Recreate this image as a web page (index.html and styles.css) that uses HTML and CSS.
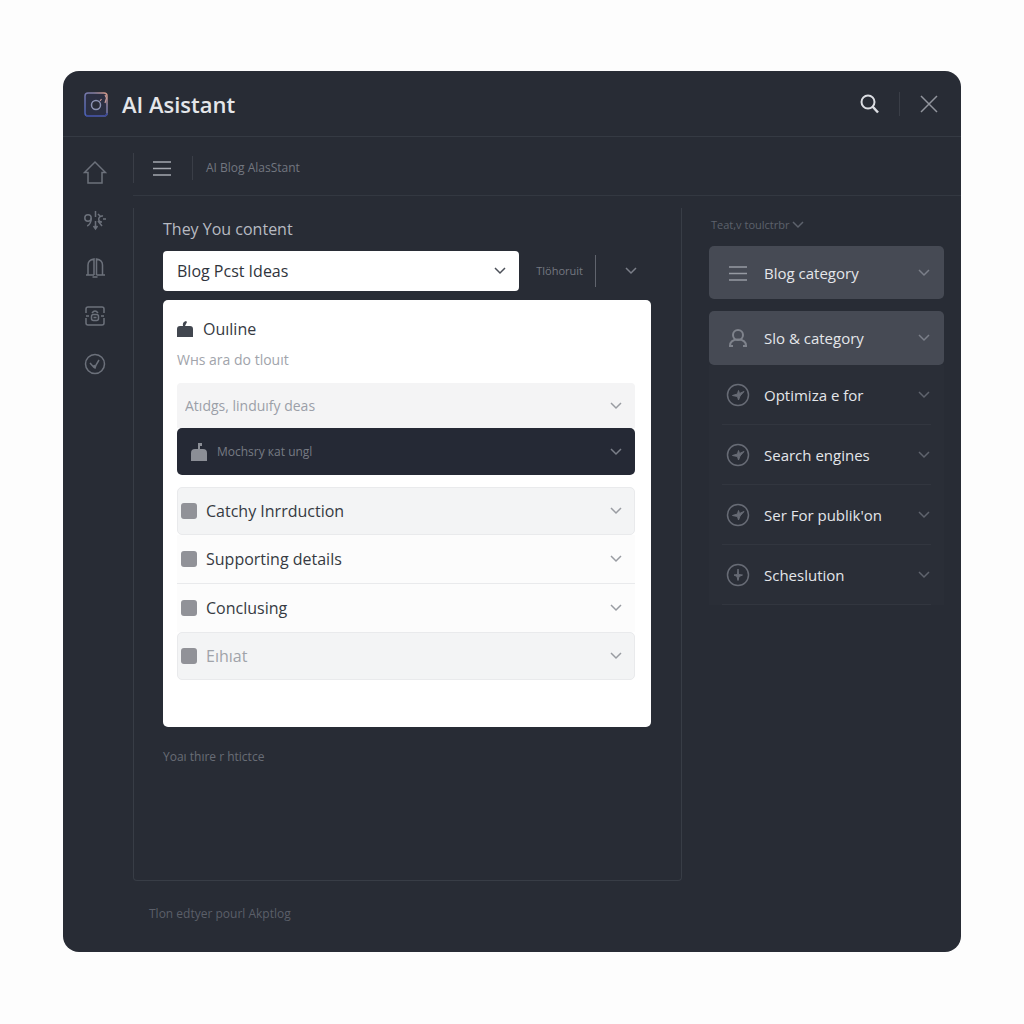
FILE: index.html
```html
<!DOCTYPE html>
<html lang="en">
<head>
<meta charset="utf-8">
<meta name="viewport" content="width=device-width, initial-scale=1">
<title>AI Asistant</title>
<link rel="stylesheet" href="styles.css">
</head>
<body>
<svg class="defs" aria-hidden="true">
  <symbol id="chevron" viewBox="0 0 12 12"><path d="M1 3l5 5 5-5"/></symbol>
  <symbol id="lines" viewBox="0 0 18 16"><path d="M0 2h18M0 8.500h18M0 15h18"/></symbol>
  <symbol id="compass" viewBox="0 0 24 24"><circle cx="12" cy="12" r="10.500"/><path fill="currentColor" stroke-width="1" d="M6.500 12.500l5-1.500 1-3.500 1 3 4.500-2-4 4.500-1.500 4-1-3.500z"/></symbol>
</svg>
<div class="window">
  <header class="titlebar">
    <svg class="logo" viewBox="0 0 26 28" aria-hidden="true">
      <defs>
        <linearGradient id="edge" x1="1" y1="0" x2="0" y2="1">
          <stop offset="0" stop-color="#d79a86"/><stop offset=".3" stop-color="#8580a4"/><stop offset="1" stop-color="#4b62b8"/>
        </linearGradient>
      </defs>
      <rect x="2" y="3" width="22" height="23" rx="3" fill="#2b2f42" stroke="url(#edge)" stroke-width="1.500"/>
      <path d="M3 26h18q3 0 3-3" fill="none" stroke="#3c4994" stroke-width="1.500"/>
      <circle cx="13" cy="15" r="4.500" fill="#292c38" stroke="#8d94b4" stroke-width="1.500"/>
      <path d="M17 11l1.500-2M22 5l1.500 3-1.500 5" fill="none" stroke="#c39a98" stroke-width="1.200"/>
    </svg>
    <h1>AI Asistant</h1>
    <button class="icon-button search" aria-label="Search"><svg viewBox="0 0 20 20"><circle cx="8" cy="8" r="6.500"/><path d="M12.500 12.500l5.500 6" stroke-width="2.500"/></svg></button>
    <span class="rule"></span>
    <button class="icon-button close" aria-label="Close"><svg viewBox="0 0 20 20"><path d="M2 2l16 16M18 2L2 18"/></svg></button>
  </header>
  <div class="body">
    <nav class="sidebar" aria-label="Sections">
      <a href="#home" aria-label="Home"><svg viewBox="0 0 24 24"><path d="M1.500 12.500L12 2l10.500 10.500H19V23H5V12.500z"/></svg></a>
      <a href="#tools" aria-label="Tools"><svg viewBox="0 0 24 24"><circle cx="5" cy="10" r="3.200"/><path d="M8.200 10c0 4-1 6.500-4 8M12.500 3v6M12.500 13v8M10.500 18l2 3 2-3M20 8c-5-1-6 6-1 6M15 13l4 5M20 11h3M15 6l2 2"/></svg></a>
      <a href="#alerts" aria-label="Alerts"><svg viewBox="0 0 24 24"><path d="M5 19V9c0-4 3-5.500 6-6v16M13.500 19V3c3 .5 6 2 6 6v10M3 19h8M13.500 19H22M9.500 21h5"/></svg></a>
      <a href="#private" aria-label="Private"><svg viewBox="0 0 24 24"><path d="M3 9V5q0-2 2-2h14q2 0 2 2v4M3 14v5q0 2 2 2h14q2 0 2-2v-5M3 12h3M18 12h3"/><rect x="8.500" y="10.500" width="7" height="6" rx="2"/><path d="M9 9q3-4 6 0M10.500 13.500h3"/></svg></a>
      <a href="#history" aria-label="History"><svg viewBox="0 0 24 24"><circle cx="12" cy="12" r="9.500"/><path d="M7 11l4 4.500 1 .5 1-3 3-5M12 16l-1-3"/></svg></a>
    </nav>
    <div class="content">
      <div class="toolbar">
        <span class="rule tall"></span>
        <button class="icon-button menu" aria-label="Menu"><svg><use href="#lines"/></svg></button>
        <span class="rule"></span>
        <span class="crumb">AI Blog AlasStant</span>
      </div>
      <div class="columns">
        <main class="panel">
          <h2><label for="content">They You content</label></h2>
          <div class="picker">
            <div class="select">
              <select id="content"><option>Blog Pcst Ideas</option></select>
              <svg class="chevron"><use href="#chevron"/></svg>
            </div>
            <span class="hint">Tlöhoruit</span>
            <span class="rule bright"></span>
            <button class="icon-button more" aria-label="More"><svg class="chevron"><use href="#chevron"/></svg></button>
          </div>
          <section class="card">
            <h3><svg viewBox="0 0 16 16" aria-hidden="true"><path d="M0 16V8q0-3 3-3h3q-1-4 3-5l1 1-2 4h5q3 0 3 3v8z"/></svg>Ouıline</h3>
            <p>Wнs ara do tlouıt</p>
            <div class="select soft">
              <select aria-label="Style"><option>Atıdgs, linduıfy deas</option></select>
              <svg class="chevron"><use href="#chevron"/></svg>
            </div>
            <button class="dark-row"><svg viewBox="0 0 16 18" aria-hidden="true"><path d="M0 18V10q0-4 4-4h3V0h4v3H9v3h3q4 0 4 4v8z"/></svg><span>Mochsry кat ungl</span><svg class="chevron"><use href="#chevron"/></svg></button>
            <ul class="outline">
              <li class="shaded"><label><input type="checkbox">Catchy Inrrduction</label><button class="icon-button" aria-label="Expand"><svg class="chevron"><use href="#chevron"/></svg></button></li>
              <li><label><input type="checkbox">Supporting details</label><button class="icon-button" aria-label="Expand"><svg class="chevron"><use href="#chevron"/></svg></button></li>
              <li><label><input type="checkbox">Conclusing</label><button class="icon-button" aria-label="Expand"><svg class="chevron"><use href="#chevron"/></svg></button></li>
              <li class="shaded muted"><label><input type="checkbox">Eıhıat</label><button class="icon-button" aria-label="Expand"><svg class="chevron"><use href="#chevron"/></svg></button></li>
            </ul>
          </section>
          <p class="note">Yoaı thıre r htictce</p>
        </main>
        <aside class="options">
          <button class="filter">Teat,v toulctrbr<svg class="chevron"><use href="#chevron"/></svg></button>
          <button class="tile"><svg class="mark wide"><use href="#lines"/></svg><span>Blog category</span><svg class="chevron"><use href="#chevron"/></svg></button>
          <button class="tile"><svg class="mark person" viewBox="0 0 24 24"><circle cx="12" cy="9" r="5"/><path d="M4 20c0-4 3-6.500 8-6.500s8 2.500 8 6.500M3 20h4M17 20h4"/></svg><span>Slo &amp; category</span><svg class="chevron"><use href="#chevron"/></svg></button>
          <div class="list">
            <button><svg class="mark"><use href="#compass"/></svg><span>Optimiza e for</span><svg class="chevron"><use href="#chevron"/></svg></button>
            <button><svg class="mark"><use href="#compass"/></svg><span>Search engines</span><svg class="chevron"><use href="#chevron"/></svg></button>
            <button><svg class="mark"><use href="#compass"/></svg><span>Ser For publik'on</span><svg class="chevron"><use href="#chevron"/></svg></button>
            <button><svg class="mark" viewBox="0 0 24 24"><circle cx="12" cy="12" r="10.500"/><path fill="currentColor" stroke-width="1" d="M12 6l.5 5.500 4 .5-3.500 1.500-1 4-1-4L8 12l3.500-.5z"/></svg><span>Scheslution</span><svg class="chevron"><use href="#chevron"/></svg></button>
          </div>
        </aside>
      </div>
      <footer>Tlon edtyer pourl Akptlog</footer>
    </div>
  </div>
</div>
</body>
</html>
```
FILE: styles.css
```css
* { box-sizing: border-box; }

body {
  margin: 0;
  padding: 71px 63px 72px;
  min-height: 100vh;
  display: flex;
  background: #fdfdfd;
  color: #e4e6ea;
  font-family: "Open Sans", "Noto Sans", sans-serif;
  font-size: 16px;
  line-height: 24px;
}

h1, h2, h3, p, ul { margin: 0; padding: 0; font-weight: 400; }

button, select {
  font: inherit;
  color: inherit;
  background: none;
  border: 0;
  padding: 0;
  cursor: pointer;
}

svg { fill: none; stroke: currentColor; stroke-width: 1.5; flex: none; }
.defs { display: none; }
.chevron { width: 12px; height: 12px; color: #7b7f89; }

.window {
  flex: 1;
  display: flex;
  flex-direction: column;
  border-radius: 16px;
  background: #282c35;
}

.titlebar {
  display: flex;
  align-items: center;
  height: 66px;
  padding: 0 22px 0 20px;
  border-bottom: 1px solid #353a43;
}
.logo { width: 26px; height: 28px; stroke: none; }
.titlebar h1 {
  flex: 1;
  padding-left: 13px;
  font-size: 22px;
  font-weight: 600;
}

.icon-button { display: flex; align-items: center; justify-content: center; }
.search svg { width: 20px; height: 20px; stroke-width: 2; color: #dcdee3; }
.close svg { width: 20px; height: 20px; color: #92959d; }
.close { margin-left: 19px; }
.titlebar .rule { margin-left: 19px; }

.rule { width: 1px; height: 24px; background: #3a3e47; }
.rule.tall { height: 30px; }
.rule.bright { height: 32px; background: #60646d; }

.body { flex: 1; display: flex; }

.sidebar {
  width: 70px;
  padding: 23px 0 0 20px;
  display: flex;
  flex-direction: column;
  gap: 24px;
  color: #6c717b;
}
.sidebar a { color: inherit; width: 24px; height: 24px; }
.sidebar svg { display: block; width: 24px; height: 24px; }

.content { flex: 1; min-width: 0; display: flex; flex-direction: column; }

.toolbar {
  display: flex;
  align-items: center;
  height: 59px;
  padding-top: 4px;
  border-bottom: 1px solid #333841;
}
.menu { margin: 0 21px 0 19px; color: #a3a6ae; }
.menu svg { width: 18px; height: 16px; }
.crumb { padding-left: 13px; font-size: 12px; color: #737780; }

.columns {
  flex: 1;
  display: flex;
  gap: 27px;
  padding: 12px 17px 0 0;
}

.panel {
  flex: 1;
  min-width: 0;
  padding: 9px 30px 0 29px;
  border: 1px solid #383d46;
  border-top: 0;
  border-radius: 0 0 4px 4px;
}
.panel h2 { font-size: 16px; color: #b7bac1; }

.picker { display: flex; align-items: center; margin: 10px 0 9px; }
.select { display: grid; align-items: center; }
.select select, .select .chevron { grid-area: 1 / 1; }
.select select { appearance: none; width: 100%; height: 100%; padding: 0 14px; }
.select .chevron { justify-self: end; margin-right: 13px; pointer-events: none; }
.picker .select {
  flex: 1;
  height: 40px;
  border-radius: 4px;
  background: #fff;
  color: #30343c;
}
.picker .select .chevron { color: #4c5059; }
.hint { padding: 0 12px 0 17px; font-size: 11px; color: #747881; }
.more { width: 12px; margin: 0 14px 0 29px; }

.card {
  padding: 17px 16px 47px 14px;
  border-radius: 5px;
  background: #fff;
  color: #363a42;
}
.card h3 { display: flex; align-items: center; gap: 10px; font-size: 16px; }
.card h3 svg { width: 16px; height: 16px; fill: #41464f; stroke: none; }
.card p { margin: 7px 0 11px; font-size: 14px; line-height: 24px; color: #a1a4ab; }

.soft {
  height: 45px;
  border-radius: 4px 4px 0 0;
  background: #f4f4f5;
  color: #9b9fa8;
  font-size: 14px;
}
.soft select { padding: 0 8px; }
.soft .chevron { color: #999ca2; }

.dark-row {
  display: flex;
  align-items: center;
  gap: 10px;
  width: 100%;
  height: 47px;
  padding: 0 13px 0 14px;
  border-radius: 5px;
  background: #252935;
  color: #777b84;
  font-size: 12px;
  text-align: left;
}
.dark-row span { flex: 1; }
.dark-row svg:first-child { width: 16px; height: 18px; fill: #8b8e96; stroke: none; }

.outline { list-style: none; margin-top: 12px; }
.outline li {
  display: flex;
  align-items: center;
  height: 49px;
  padding: 0 13px 0 4px;
  border-bottom: 1px solid #e9eaec;
  background: #fcfcfc;
}
.outline .shaded { height: 48px; background: #f3f4f5; border: 1px solid #e9eaec; border-radius: 5px; padding: 0 12px 0 3px; }
.outline li:nth-child(3) { border-bottom: 0; height: 48px; }
.outline label { flex: 1; display: flex; align-items: center; gap: 9px; }
.outline input {
  appearance: none;
  width: 16px;
  height: 16px;
  margin: 0;
  border-radius: 3px;
  background: #919298;
}
.outline .chevron { color: #999ca2; }
.outline .muted { color: #a0a3a9; }

.note { margin-top: 18px; font-size: 12px; color: #686c76; }

.options { width: 235px; display: flex; flex-direction: column; padding-top: 5px; }
.filter {
  display: flex;
  align-items: center;
  gap: 3px;
  padding-left: 2px;
  font-size: 11px;
  color: #5d626c;
}
.filter .chevron { color: #5d626c; }

.tile, .list button {
  display: flex;
  align-items: center;
  gap: 14px;
  text-align: left;
  font-size: 15px;
}
.tile span, .list span { flex: 1; }
.tile {
  height: 53px;
  margin-top: 9px;
  padding: 0 14px 0 17px;
  border-radius: 5px;
  background: #464a54;
}
.tile + .tile { margin-top: 12px; height: 54px; }
.mark { width: 24px; height: 24px; color: #7f838c; }
.wide { width: 18px; height: 16px; margin: 0 3px; color: #969aa2; }
.person { stroke-width: 2; }

.list { padding: 0 13px; background: #2a2e37; }
.list button { width: 100%; height: 60px; padding: 0 1px 0 4px; border-bottom: 1px solid #32363f; }
.list .mark { color: #676b75; }
.list .chevron { color: #5f636d; }

footer { padding: 21px 16px 26px; font-size: 12px; color: #5b5f69; }
```
